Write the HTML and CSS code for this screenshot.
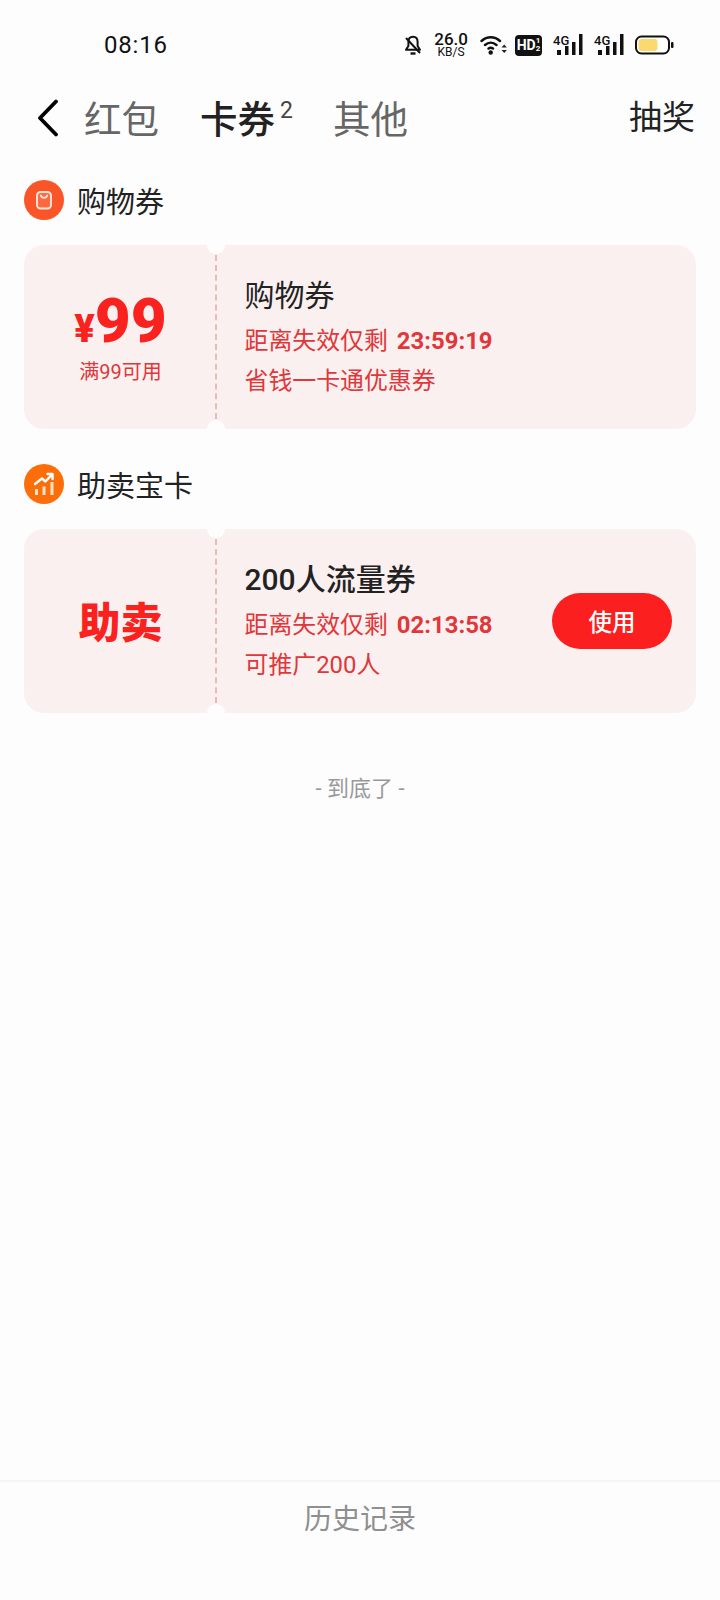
FILE: index.html
```html
<!DOCTYPE html>
<html lang="zh">
<head>
<meta charset="utf-8">
<title>卡券</title>
<link rel="stylesheet" href="styles.css">
</head>
<body>
<div class="page">
  <div class="status">
    <span class="time">08:16</span>
    <div class="status-icons">
      <svg class="ic-bell" width="18" height="21" viewBox="0 0 18 21"><path d="M9 1.800c-3 0-4.600 2.300-4.600 5v4.200L2 14.800h14L13.600 11V6.800c0-2.700-1.600-5-4.600-5z" fill="none" stroke="#111" stroke-width="2" stroke-linejoin="round"/><path d="M6.500 18.500h5" stroke="#111" stroke-width="2.400"/><path d="M2 3l14 15" stroke="#111" stroke-width="2"/></svg>
      <div class="speed"><span class="speed-num">26.0</span><span class="speed-unit">KB/S</span></div>
      <svg class="ic-wifi" width="28" height="20" viewBox="0 0 28 20"><path d="M1.500 6C7 1 14.500 1 20 6M5 10c3.500-3 8-3 11.500 0M8.500 13.500c1.500-1 3-1 4.500 0" fill="none" stroke="#111" stroke-width="2.400" stroke-linecap="round"/><circle cx="10.700" cy="17.500" r="2.200" fill="#111"/><path d="M21.500 12.500l2.700-3 2.700 3zM21.500 15l2.700 3 2.700-3z" fill="#222"/></svg>
      <div class="hd"><span class="hd-main">HD</span><span class="hd-sub">1<br>2</span></div>
      <div class="sig"><span class="sig-label">4G</span><svg width="30" height="22" viewBox="0 0 30 22"><path d="M4 16h4v5H4zM12 12h3.500v9H12zM19 8h3.500v13H19zM26 0h3.500v21H26z" fill="#111"/></svg></div>
      <div class="sig"><span class="sig-label">4G</span><svg width="30" height="22" viewBox="0 0 30 22"><path d="M4 16h4v5H4zM12 12h3.500v9H12zM19 8h3.500v13H19zM26 0h3.500v21H26z" fill="#111"/></svg></div>
      <svg class="ic-batt" width="39" height="20" viewBox="0 0 39 20"><rect x="1" y="1.500" width="33" height="17" rx="5.500" fill="#fff" stroke="#111" stroke-width="2"/><rect x="3.500" y="4" width="19" height="12" rx="3" fill="#fbd96f"/><rect x="36" y="7" width="2.500" height="6" rx="1" fill="#111"/></svg>
    </div>
  </div>

  <div class="nav">
    <svg class="back" width="22" height="38" viewBox="0 0 22 38"><path d="M19 2.500 3 19l16 16.500" fill="none" stroke="#000" stroke-width="3.800" stroke-linecap="round" stroke-linejoin="round"/></svg>
    <span class="tab">红包</span>
    <span class="tab tab-active">卡券</span>
    <sup class="tab-count">2</sup>
    <span class="tab tab-other">其他</span>
    <span class="draw">抽奖</span>
  </div>

  <section class="group">
    <div class="group-head">
      <span class="badge badge-shop"><svg width="20" height="22" viewBox="0 0 20 22"><rect x="3" y="3" width="14" height="16.500" rx="3.500" fill="#fc6a3e" stroke="#ffe3d6" stroke-width="2"/><path d="M6.800 6.500a3.400 3.400 0 0 0 6.400 0" fill="none" stroke="#ffe3d6" stroke-width="2" stroke-linecap="round"/></svg></span>
      <span class="group-title">购物券</span>
    </div>
    <div class="ticket">
      <div class="ticket-left">
        <div class="price"><span class="yen">¥</span><span class="amount">99</span></div>
        <div class="cond">满99可用</div>
      </div>
      <div class="dash"></div>
      <div class="ticket-body">
        <div class="ticket-title">购物券</div>
        <div class="ticket-line">距离失效仅剩<b class="timer">23:59:19</b></div>
        <div class="ticket-line">省钱一卡通优惠券</div>
      </div>
    </div>
  </section>

  <section class="group group-second">
    <div class="group-head">
      <span class="badge badge-sell"><svg width="24" height="24" viewBox="0 0 24 24"><path d="M3 12 10 6.500l3.500 3L20 2.500M15.500 2h5v5" fill="none" stroke="#fff" stroke-width="2.400" stroke-linejoin="round" stroke-linecap="round"/><path d="M3 17h3v6H3zM10.500 14.500h3V23h-3zM18.500 10h3v13h-3z" fill="#ffe3c8"/></svg></span>
      <span class="group-title">助卖宝卡</span>
    </div>
    <div class="ticket">
      <div class="ticket-left">
        <div class="sell">助卖</div>
      </div>
      <div class="dash"></div>
      <div class="ticket-body">
        <div class="ticket-title ticket-title-bold">200人流量券</div>
        <div class="ticket-line">距离失效仅剩<b class="timer">02:13:58</b></div>
        <div class="ticket-line">可推广200人</div>
      </div>
      <button class="use">使用</button>
    </div>
  </section>

  <div class="end">- 到底了 -</div>
  <div class="spacer"></div>
  <div class="footer">历史记录</div>
</div>
</body>
</html>
```

FILE: styles.css
```css
* { box-sizing: border-box; }
html, body { margin: 0; padding: 0; }
body {
  background: #fdfdfd;
  font-family: Roboto, "Noto Sans CJK SC", sans-serif;
  color: #222;
}
.page { width: 720px; height: 1600px; display: flex; flex-direction: column; }

.status { height: 90px; padding: 0 46px 0 104px; display: flex; align-items: center; justify-content: space-between; }
.time { font-size: 24px; letter-spacing: .8px; color: #111; }
.status-icons { display: flex; align-items: center; }
.ic-bell { margin-right: 12px; }
.speed { display: flex; flex-direction: column; align-items: center; margin-right: 12px; color: #111; line-height: 1; }
.speed-num { font-size: 17px; font-weight: 500; line-height: 14px; }
.speed-unit { font-size: 12px; font-weight: 400; line-height: 12px; }
.ic-wifi { margin-right: 7px; }
.hd { width: 27px; height: 21px; background: #111; border-radius: 4px; color: #fff; display: flex; align-items: center; justify-content: center; margin-right: 11px; }
.hd-main { font-size: 14px; font-weight: 700; line-height: 1; }
.hd-sub { font-size: 8px; font-weight: 700; line-height: 8px; }
.sig { position: relative; width: 30px; height: 22px; margin-right: 11px; }
.sig svg { display: block; }
.sig-label { position: absolute; left: 0; top: 0; font-size: 13px; font-weight: 500; color: #111; line-height: 13px; }
.ic-batt { display: block; }

.nav { height: 56px; padding: 0 24px 0 37px; display: flex; align-items: center; }
.back { flex: none; margin-right: 25px; }
.tab { font-size: 37.500px; color: #666; line-height: 56px; padding-top: 4px; }
.tab-active { margin-left: 41px; color: #222; font-weight: 500; }
.tab-count { font-size: 23px; color: #444; line-height: 1; align-self: flex-start; margin: 9px 0 0 5px; }
.tab-other { margin-left: 40px; }
.draw { margin-left: auto; margin-right: 1px; font-size: 33px; line-height: 56px; color: #222; }

.group { padding: 0 24px; margin-top: 18px; }
.group-second { margin-top: 19px; }
.group-head { height: 72px; display: flex; align-items: center; margin-bottom: 9px; }
.badge { width: 40px; height: 40px; border-radius: 50%; display: flex; align-items: center; justify-content: center; margin-right: 13px; }
.badge-shop { background: #fa5528; }
.badge-sell { background: #fb6e0a; }
.group-title { font-size: 29px; color: #222; }

.ticket { position: relative; height: 184px; background: #fbf0f0; border-radius: 20px; display: flex; align-items: center; }
.ticket::before, .ticket::after { content: ""; position: absolute; left: 183px; width: 18px; height: 18px; border-radius: 50%; background: #fdfdfd; }
.ticket::before { top: -9px; }
.ticket::after { bottom: -9px; }
.ticket-left { width: 191px; padding-left: 2px; text-align: center; }
.price { display: flex; align-items: baseline; justify-content: center; color: #f9221f; font-weight: 900; line-height: 52px; margin-top: 6px; }
.yen { font-size: 38px; }
.amount { font-size: 62px; }
.cond { font-size: 20px; color: #e0373a; line-height: 28px; margin-top: 3px; }
.sell { font-size: 42px; font-weight: 900; color: #f9221f; line-height: 1.2; padding-top: 6px; }
.dash { width: 0; height: 164px; border-left: 2px dashed #e6bdb6; flex: none; }
.ticket-body { margin-left: 27.500px; padding-top: 3px; flex: 1; }
.ticket-title { font-size: 30px; line-height: 40px; color: #222; margin-bottom: 5px; }
.ticket-title-bold { font-weight: 500; }
.ticket-line { font-size: 23.900px; line-height: 40px; color: #e0373a; white-space: nowrap; }
.timer { font-weight: 700; margin-left: 9px; }
.use { width: 120px; height: 56px; border: 0; border-radius: 28px; background: #fb1f1f; color: #fff; font: 500 23.500px Roboto, "Noto Sans CJK SC", sans-serif; margin-right: 24px; flex: none; }

.end { margin-top: 61px; text-align: center; font-size: 22px; line-height: 30px; color: #999; }
.spacer { flex: 1; }
.footer { height: 120px; border-top: 2px solid #f6f6f6; text-align: center; font-size: 28px; line-height: 76px; color: #8f8f8f; }
```
